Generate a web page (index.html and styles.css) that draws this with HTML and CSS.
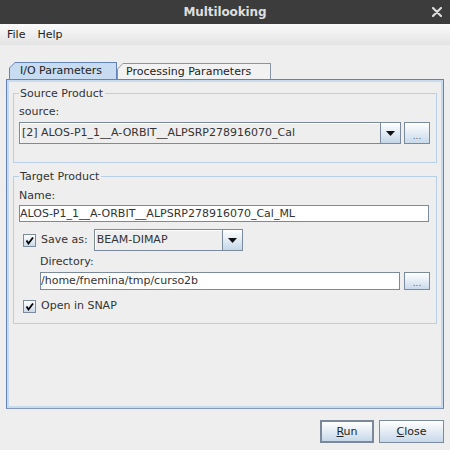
FILE: index.html
```html
<!DOCTYPE html>
<html>
<head>
<meta charset="utf-8">
<title>Multilooking</title>
<link rel="stylesheet" href="styles.css">
</head>
<body>
<div class="window">
  <div class="titlebar">
    <span class="title">Multilooking</span>
    <svg class="close" width="10" height="10" viewBox="0 0 10 10"><path d="M1 1 L9 9 M9 1 L1 9" stroke="#dcdcdc" stroke-width="2.2" stroke-linecap="round"/></svg>
  </div>
  <div class="menubar">
    <span class="menu">File</span>
    <span class="menu">Help</span>
  </div>
  <div class="main">
    <div class="tabs">
      <div class="tab tab-active"><div class="tab-in">I/O Parameters</div></div>
      <div class="tab tab-idle"><div class="tab-in">Processing Parameters</div></div>
    </div>
    <div class="panel">
      <fieldset class="group group-source">
        <legend>Source Product</legend>
        <div class="label">source:</div>
        <div class="row row-src">
          <div class="combo combo-src">
            <span class="combo-text">[2] ALOS-P1_1__A-ORBIT__ALPSRP278916070_Cal</span>
            <span class="combo-btn"><svg width="9" height="5" viewBox="0 0 9 5"><path d="M0 0 H9 L4.5 5 Z" fill="#111"/></svg></span>
          </div>
          <button class="dots">...</button>
        </div>
      </fieldset>
      <fieldset class="group group-target">
        <legend>Target Product</legend>
        <div class="label">Name:</div>
        <div class="field field-name">ALOS-P1_1__A-ORBIT__ALPSRP278916070_Cal_ML</div>
        <div class="row row-save">
          <span class="check"><svg width="11" height="11" viewBox="0 0 11 11"><path d="M2.5 5.5 L4.5 8.5 L9 2.5" fill="none" stroke="#000" stroke-width="1.8"/></svg></span>
          <span class="check-label">Save as:</span>
          <div class="combo combo-fmt">
            <span class="combo-text">BEAM-DIMAP</span>
            <span class="combo-btn"><svg width="9" height="5" viewBox="0 0 9 5"><path d="M0 0 H9 L4.5 5 Z" fill="#111"/></svg></span>
          </div>
        </div>
        <div class="label label-dir">Directory:</div>
        <div class="row row-dir">
          <div class="field field-dir">/home/fnemina/tmp/curso2b</div>
          <button class="dots dots-dir">...</button>
        </div>
        <div class="row row-open">
          <span class="check"><svg width="11" height="11" viewBox="0 0 11 11"><path d="M2.5 5.5 L4.5 8.5 L9 2.5" fill="none" stroke="#000" stroke-width="1.8"/></svg></span>
          <span class="check-label">Open in SNAP</span>
        </div>
      </fieldset>
    </div>
    <div class="actions">
      <button class="btn btn-run"><span class="mn">R</span>un</button>
      <button class="btn btn-close"><span class="mn">C</span>lose</button>
    </div>
  </div>
</div>
</body>
</html>
```

FILE: styles.css
```css
html, body {
  margin: 0;
  padding: 0;
}
body {
  font-family: "DejaVu Sans", sans-serif;
  font-size: 11px;
  color: #333333;
  background: #eeeeee;
}
.window {
  width: 450px;
  height: 450px;
  display: flex;
  flex-direction: column;
  overflow: hidden;
}
.titlebar {
  height: 24px;
  flex: none;
  background: #3c3c3c;
  display: grid;
  grid-template-columns: 1fr auto 1fr;
  align-items: center;
}
.title {
  grid-column: 2;
  font-weight: bold;
  font-size: 12px;
  color: #dedede;
  letter-spacing: -0.1px;
}
.close {
  grid-column: 3;
  justify-self: end;
  margin-right: 8px;
}
.menubar {
  height: 21px;
  flex: none;
  line-height: 21px;
  background: linear-gradient(#fbfbfb, #e3e3e3);
  display: flex;
  gap: 12px;
  padding-left: 7px;
  color: #222;
}
.main {
  flex: 1;
  min-height: 0;
  display: flex;
  flex-direction: column;
  padding: 17px 6px 7px;
}
.tabs {
  display: flex;
  align-items: flex-end;
  height: 17px;
  padding-left: 3px;
  flex: none;
}
.tab {
  clip-path: polygon(6px 0, 100% 0, 100% 100%, 0 100%, 0 6px);
  box-sizing: border-box;
  display: flex;
}
.tab-in {
  flex: 1;
  margin: 1px 1px 0 1px;
  clip-path: polygon(5px 0, 100% 0, 100% 100%, 0 100%, 0 5px);
  white-space: nowrap;
  color: #222;
}
.tab-active {
  width: 108px;
  height: 17px;
  background: #6382bf;
}
.tab-active .tab-in {
  background: #c8dcf1;
  line-height: 16px;
  padding-left: 10px;
}
.tab-idle {
  width: 154px;
  height: 16px;
  background: #8a95a4;
}
.tab-idle .tab-in {
  background: #f2f2f2;
  line-height: 15px;
  padding-left: 8px;
}
.panel {
  flex: 1;
  min-height: 0;
  border: 1px solid #6382bf;
  border-bottom-color: #8497b6;
  box-shadow: inset 0 0 0 2px #c8daee;
  padding: 7px 6px;
}
.group {
  margin: 0;
  min-width: 0;
  border: 1px solid #b8cfe6;
  padding: 5px 5px 18px;
}
.group legend {
  padding: 0 2px 0 1px;
  line-height: 13px;
  color: #333;
}
.group-target {
  margin-top: 7px;
  padding-top: 6px;
  padding-bottom: 10px;
}
.label {
  line-height: 14px;
}
.row {
  display: flex;
  align-items: center;
}
.row-src {
  margin-top: 3px;
  gap: 3px;
}
.combo {
  box-sizing: border-box;
  height: 22px;
  display: flex;
  border: 1px solid #7c8b9b;
  background: #eeeeee;
}
.combo-src {
  flex: 1;
}
.combo-text {
  flex: 1;
  padding-left: 2px;
  line-height: 20px;
  white-space: nowrap;
  overflow: hidden;
  box-shadow: inset 1px 1px 0 #ffffff;
  color: #333;
}
.combo-btn {
  width: 19px;
  flex: none;
  border-left: 1px solid #7c8b9b;
  background: linear-gradient(#ffffff, #c5d7ea);
  display: flex;
  align-items: center;
  justify-content: center;
}
.dots {
  box-sizing: border-box;
  width: 26px;
  height: 22px;
  flex: none;
  margin: 0 1px 0 0;
  padding: 0;
  border: 1px solid #7c8b9b;
  background: linear-gradient(#ffffff, #c9daeb);
  font-family: "DejaVu Sans", sans-serif;
  font-size: 9px;
  color: #51627a;
  line-height: 20px;
  padding-top: 3px;
}
.field {
  box-sizing: border-box;
  border: 1px solid #7c8b9b;
  background: #ffffff;
  white-space: nowrap;
  overflow: hidden;
  color: #333;
}
.field-name {
  height: 17px;
  line-height: 15px;
  margin: 2px 2px 0 0;
}
.row-save {
  margin-top: 7px;
  height: 22px;
}
.check {
  box-sizing: border-box;
  width: 13px;
  height: 13px;
  flex: none;
  margin-left: 4px;
  border: 1px solid #7c8b9b;
  background: linear-gradient(#ffffff, #c9d9eb);
  display: flex;
}
.check-label {
  margin-left: 5px;
  line-height: 14px;
}
.combo-fmt {
  width: 149px;
  margin-left: 6px;
}
.label-dir {
  margin-top: 4px;
  margin-left: 21px;
}
.row-dir {
  margin-top: 3px;
  margin-left: 21px;
  gap: 4px;
}
.field-dir {
  flex: 1;
  height: 18px;
  line-height: 16px;
}
.dots-dir {
  height: 18px;
  line-height: 16px;
  padding-top: 2px;
}
.row-open {
  margin-top: 9px;
  height: 14px;
}
.actions {
  flex: none;
  margin-top: 11px;
  height: 23px;
  display: flex;
  justify-content: flex-end;
  gap: 5px;
}
.btn {
  box-sizing: border-box;
  height: 23px;
  padding: 0;
  margin: 0;
  border: 1px solid #7c8b9b;
  background: linear-gradient(#ffffff, #c7d8ea);
  font-family: "DejaVu Sans", sans-serif;
  font-size: 11px;
  color: #222;
}
.btn-run {
  width: 54px;
  border: 2px solid #7a8899;
}
.btn-close {
  width: 65px;
}
.mn {
  text-decoration: underline;
}
```
